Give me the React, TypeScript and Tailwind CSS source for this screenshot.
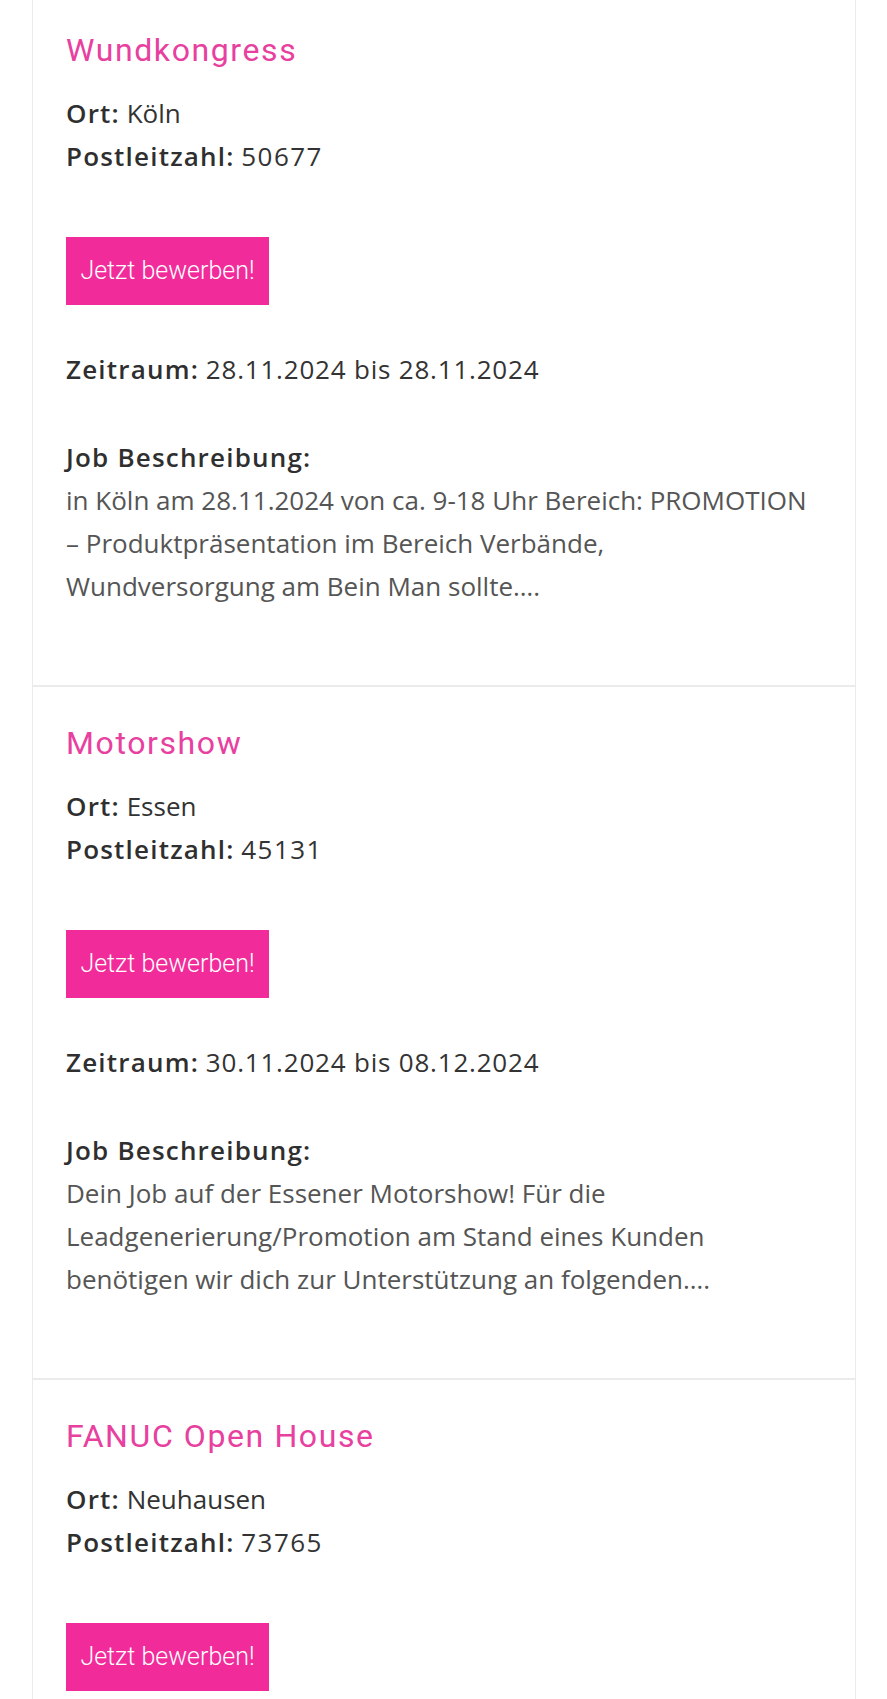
import React from 'react';

type Job = {
  title: string;
  ort: string;
  plz: string;
  from: string;
  to: string;
  desc: string[];
};

const jobs: Job[] = [
  {
    title: 'Wundkongress',
    ort: 'Köln',
    plz: '50677',
    from: '28.11.2024',
    to: '28.11.2024',
    desc: [
      'in Köln am 28.11.2024 von ca. 9-18 Uhr Bereich: PROMOTION',
      '– Produktpräsentation im Bereich Verbände,',
      'Wundversorgung am Bein Man sollte….',
    ],
  },
  {
    title: 'Motorshow',
    ort: 'Essen',
    plz: '45131',
    from: '30.11.2024',
    to: '08.12.2024',
    desc: [
      'Dein Job auf der Essener Motorshow! Für die',
      'Leadgenerierung/Promotion am Stand eines Kunden',
      'benötigen wir dich zur Unterstützung an folgenden….',
    ],
  },
  {
    title: 'FANUC Open House',
    ort: 'Neuhausen',
    plz: '73765',
    from: '',
    to: '',
    desc: [],
  },
];

function Label({ children }: { children: React.ReactNode }) {
  return <span className="font-semibold tracking-[1.2px] text-[#2f2f2f]">{children}</span>;
}

function JobCard({ job }: { job: Job }) {
  return (
    <div className="border border-[#ebebeb] bg-white px-[33px] pt-[36px] pb-[77px]">
      <h3 className="font-['Roboto',sans-serif] text-[32px] leading-[40px] tracking-[1.6px] font-normal text-[#e8409f]">{job.title}</h3>
      <div className="mt-[22px] text-[26px] leading-[43px] text-[#333]">
        <div><Label>Ort:</Label> {job.ort}</div>
        <div><Label>Postleitzahl:</Label> <span className="tracking-[1.4px]">{job.plz}</span></div>
      </div>
      <button type="button" className="mt-[59px] block h-[68px] w-[203px] bg-[#f22b9b] font-['Roboto',sans-serif] text-[25px] font-light text-white">
        Jetzt bewerben!
      </button>
      {job.from && (
        <>
          <div className="mt-[43px] text-[26px] leading-[43px] text-[#333]">
            <Label>Zeitraum:</Label> <span className="tracking-[0.8px]">{job.from} bis {job.to}</span>
          </div>
          <div className="mt-[45px] text-[26px] leading-[43px]">
            <div><Label>Job Beschreibung:</Label></div>
            {job.desc.map((line) => (
              <div key={line} className="whitespace-nowrap text-[#555]">{line}</div>
            ))}
          </div>
        </>
      )}
    </div>
  );
}

export default function App() {
  return (
    <div className="min-h-screen overflow-hidden bg-white font-['Open_Sans',sans-serif]">
      <div className="-mt-[7px] ml-[32px] mr-[31px] flex flex-col">
        {jobs.map((job) => (
          <JobCard key={job.title} job={job} />
        ))}
      </div>
    </div>
  );
}
